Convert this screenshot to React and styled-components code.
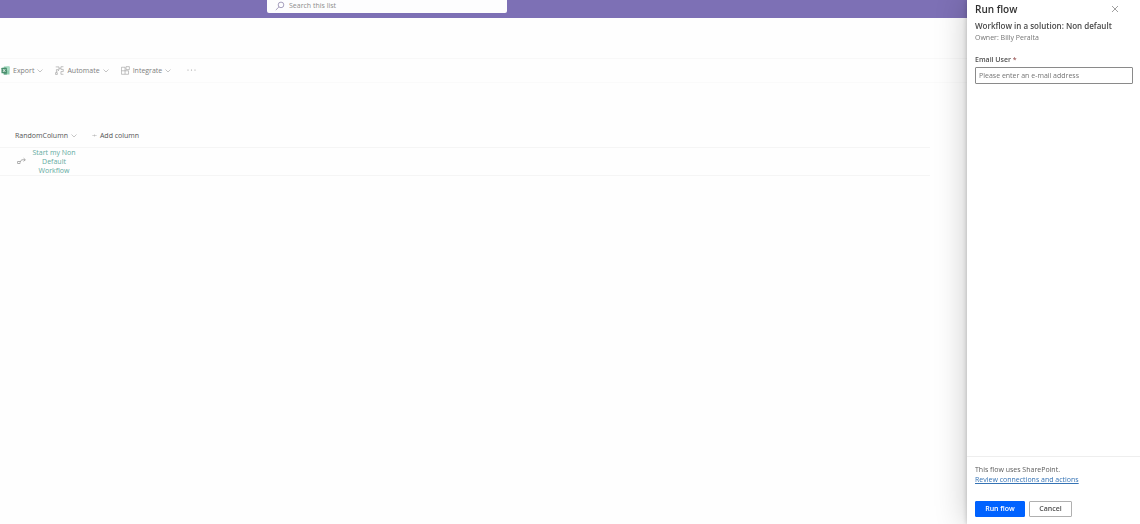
import React from 'react'
import styled, { createGlobalStyle } from 'styled-components'

const GlobalStyle = createGlobalStyle`
    * {
        box-sizing: border-box;
    }
    body {
        margin: 0;
        background: #fefefe;
        font-family: "Open Sans", "Noto Sans", sans-serif;
        font-size: 7px;
        line-height: 9px;
        color: #757575;
        overflow: hidden;
    }
    button, input {
        font: inherit;
        color: inherit;
    }
    h1, h2, p {
        margin: 0;
    }
`

function Chevron() {
    return (
        <ChevronIcon viewBox="0 0 6 6">
            <path d="M0.5 1.5 L3 4 L5.5 1.5" />
        </ChevronIcon>
    )
}

function ExcelIcon() {
    return (
        <Icon viewBox="0 0 10 10" $size={9}>
            <rect x="3" y="0.5" width="6.5" height="9" rx="0.6" fill="#8fcdb0" />
            <rect x="6" y="0.5" width="3.5" height="4.5" fill="#a9dcc4" />
            <rect x="3" y="5" width="3.5" height="4.5" fill="#5f9f80" />
            <rect x="0.5" y="2" width="6" height="6" rx="0.6" fill="#4a8f6d" />
            <path d="M2.2 3.4 L4.8 6.6 M4.8 3.4 L2.2 6.6" stroke="#fff" strokeWidth="0.9" />
        </Icon>
    )
}

function AutomateIcon() {
    return (
        <Icon viewBox="0 0 10 10" $size={9}>
            <g fill="none" stroke="#a0a0a0" strokeWidth="0.7">
                <path d="M0.6 9.4 V7.4 H2.6 V9.4 Z" />
                <path d="M1.6 7.4 V4 H3.2" />
                <path d="M0.8 1 H4.4 V4.4 H3" />
                <path d="M4.4 4.4 L2.8 6 M4.6 2.6 H6.4" />
                <path d="M9.4 0.8 H6.6 V3.8 H9.2 V6.2 H6.6 V9.2 H9.4" />
            </g>
        </Icon>
    )
}

function IntegrateIcon() {
    return (
        <Icon viewBox="0 0 10 10" $size={9}>
            <g fill="none" stroke="#a0a0a0" strokeWidth="0.7">
                <path d="M0.5 1.4 H4.5 V9.2 H0.5 Z M0.5 5.3 H8.4 V9.2 H4.5" />
                <path d="M5.6 0.7 H9.3 V4 H5.6 Z" />
            </g>
        </Icon>
    )
}

function FlowIcon() {
    return (
        <Icon viewBox="0 0 9 9" $size={9}>
            <g fill="none" stroke="#999" strokeWidth="0.8">
                <rect x="0.7" y="4.6" width="2.2" height="1.8" />
                <path d="M2.9 5.5 L4.6 2.8 H8.2 M6.6 1.2 L8.3 2.8 L6.6 4.4" />
            </g>
        </Icon>
    )
}

export default function App() {
    return (
        <Page>
            <GlobalStyle />
            <SuiteBar>
                <SearchBox>
                    <Icon viewBox="0 0 10 10" $size={10}>
                        <g fill="none" stroke="#8f86ac" strokeWidth="0.8">
                            <circle cx="6" cy="3.9" r="2.8" />
                            <path d="M3.9 6 L0.8 9" />
                        </g>
                    </Icon>
                    <SearchInput type="search" aria-label="Search this list" placeholder="Search this list" />
                </SearchBox>
            </SuiteBar>

            <CommandBar>
                <Command>
                    <ExcelIcon />
                    Export
                    <Chevron />
                </Command>
                <Command>
                    <AutomateIcon />
                    Automate
                    <Chevron />
                </Command>
                <Command>
                    <IntegrateIcon />
                    Integrate
                    <Chevron />
                </Command>
                <Command aria-label="More">
                    <Icon viewBox="0 0 9 9" $size={9}>
                        <g fill="#999">
                            <circle cx="1" cy="4" r="0.6" />
                            <circle cx="4.5" cy="4" r="0.6" />
                            <circle cx="8" cy="4" r="0.6" />
                        </g>
                    </Icon>
                </Command>
            </CommandBar>

            <List>
                <thead>
                    <tr>
                        <HeadCell>
                            <ColumnButton>
                                RandomColumn
                                <Chevron />
                            </ColumnButton>
                        </HeadCell>
                        <HeadCell>
                            <ColumnButton>
                                <Icon viewBox="0 0 5 5" $size={5}>
                                    <path d="M0.3 2.5 H4.7 M2.5 1.4 V3.6" stroke="#aaa" strokeWidth="0.5" />
                                </Icon>
                                Add column
                            </ColumnButton>
                        </HeadCell>
                    </tr>
                </thead>
                <tbody>
                    <tr>
                        <BodyCell>
                            <FlowButton>
                                <FlowIcon />
                                <FlowName>Start my Non Default Workflow</FlowName>
                            </FlowButton>
                        </BodyCell>
                        <BodyCell />
                    </tr>
                </tbody>
            </List>

            <Panel aria-label="Run flow">
                <PanelHeader>
                    <PanelTitle>Run flow</PanelTitle>
                    <CloseButton aria-label="Close">
                        <Icon viewBox="0 0 8 8" $size={8}>
                            <path d="M1 1 L7 7 M7 1 L1 7" stroke="#777" strokeWidth="0.7" />
                        </Icon>
                    </CloseButton>
                </PanelHeader>
                <PanelBody>
                    <FlowTitle>Workflow in a solution: Non default</FlowTitle>
                    <Owner>Owner: Billy Peralta</Owner>
                    <Label htmlFor="email">Email User <span>*</span></Label>
                    <TextField id="email" type="email" placeholder="Please enter an e-mail address" />
                </PanelBody>
                <PanelFooter>
                    <p>This flow uses SharePoint.</p>
                    <FooterLink href="#">Review connections and actions</FooterLink>
                    <Buttons>
                        <PrimaryButton>Run flow</PrimaryButton>
                        <DefaultButton>Cancel</DefaultButton>
                    </Buttons>
                </PanelFooter>
            </Panel>
        </Page>
    )
}

const Page = styled.main`
    min-height: 100vh;
`

const Icon = styled.svg`
    width: ${props => props.$size}px;
    height: ${props => props.$size}px;
    flex: none;
    display: block;
`

const ChevronIcon = styled.svg`
    width: 6px;
    height: 6px;
    flex: none;
    fill: none;
    stroke: #acacac;
    stroke-width: 0.7;
`

const SuiteBar = styled.header`
    height: 18px;
    padding-left: 267px;
    background: #7d70b5;
`

const SearchBox = styled.div`
    width: 240px;
    height: 13px;
    padding: 0 8px 2px;
    display: flex;
    align-items: center;
    gap: 4px;
    background: #fdfdfe;
    border-radius: 0 0 2px 2px;
`

const SearchInput = styled.input`
    flex: 1;
    min-width: 0;
    height: 11px;
    padding: 0;
    border: 0;
    outline: 0;
    background: none;
    &::placeholder {
        color: #8d8d8d;
        opacity: 1;
    }
`

const CommandBar = styled.nav`
    height: 25px;
    margin-top: 40px;
    padding-left: 1px;
    display: flex;
    align-items: center;
    gap: 12px;
    border-top: 1px solid #f8f8f8;
    border-bottom: 1px solid #fafafa;
`

const Command = styled.button`
    padding: 0;
    border: 0;
    background: none;
    display: flex;
    align-items: center;
    gap: 3px;
    color: #808080;
    &:last-child {
        padding-left: 4px;
    }
`

const List = styled.table`
    width: calc(100% - 210px);
    margin-top: 42px;
    border-collapse: collapse;
`

const HeadCell = styled.th`
    height: 22px;
    padding: 0 0 0 15px;
    text-align: left;
    font-weight: 400;
    &:first-child {
        width: 76px;
    }
`

const ColumnButton = styled.button`
    padding: 0;
    border: 0;
    background: none;
    display: flex;
    align-items: center;
    gap: 3px;
    color: #555;
    white-space: nowrap;
`

const BodyCell = styled.td`
    height: 28px;
    padding: 0 0 0 17px;
    border-top: 1px solid #f5f5f5;
    border-bottom: 1px solid #f5f5f5;
`

const FlowButton = styled.button`
    padding: 0;
    border: 0;
    background: none;
    display: flex;
    align-items: center;
    gap: 6px;
    color: #62aaa0;
`

const FlowName = styled.span`
    width: 44px;
    text-align: center;
`

const Panel = styled.aside`
    position: fixed;
    top: 0;
    right: 0;
    bottom: 0;
    width: 173px;
    display: flex;
    flex-direction: column;
    background: #fff;
    box-shadow: 0 0 30px rgba(0, 0, 0, 0.22), 0 0 5px rgba(0, 0, 0, 0.22);
`

const PanelHeader = styled.div`
    height: 18px;
    padding: 0 21px 0 8px;
    display: flex;
    align-items: center;
    justify-content: space-between;
`

const PanelTitle = styled.h1`
    font-size: 10px;
    line-height: 14px;
    font-weight: 600;
    color: #303030;
`

const CloseButton = styled.button`
    padding: 0;
    border: 0;
    background: none;
`

const PanelBody = styled.div`
    flex: 1;
    padding: 1px 7px 0 8px;
    display: flex;
    flex-direction: column;
`

const FlowTitle = styled.h2`
    font-size: 8px;
    line-height: 13px;
    font-weight: 600;
    color: #484848;
    white-space: nowrap;
`

const Owner = styled.p`
    line-height: 12px;
`

const Label = styled.label`
    margin-top: 11px;
    line-height: 9px;
    font-weight: 600;
    color: #505050;
    span {
        color: #a06060;
    }
`

const TextField = styled.input`
    width: 100%;
    height: 17px;
    margin-top: 3px;
    padding: 0 3px;
    border: 1px solid #8a8a8a;
    border-radius: 1px;
    background: #fff;
    &::placeholder {
        color: #747474;
        opacity: 1;
    }
`

const PanelFooter = styled.footer`
    padding: 8px 8px 7px;
    border-top: 1px solid #eeeeee;
    line-height: 10px;
    color: #5c5c5c;
`

const FooterLink = styled.a`
    display: block;
    color: #3573b5;
`

const Buttons = styled.div`
    margin-top: 16px;
    display: flex;
    gap: 4px;
`

const DefaultButton = styled.button`
    width: 43px;
    height: 16px;
    padding: 0;
    border: 1px solid #b0b0b0;
    border-radius: 1px;
    background: #fff;
    font-weight: 600;
    color: #4f4f4f;
`

const PrimaryButton = styled(DefaultButton)`
    width: 50px;
    border-color: #0062ff;
    background: #0062ff;
    color: #fff;
`
